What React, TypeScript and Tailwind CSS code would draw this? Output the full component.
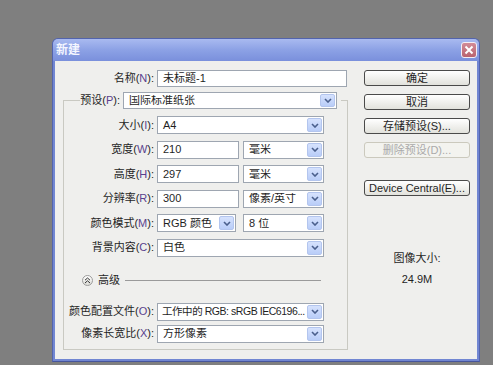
import type { ReactNode } from 'react'

const font = { fontFamily: '"Liberation Sans", "Noto Sans CJK SC", sans-serif' }

function Label({ text, hot, width = 'w-[93px]' }: { text: string; hot: string; width?: string }) {
  return (
    <div className={`${width} shrink-0 flex justify-end pr-[3px] text-[11px] leading-none text-[#1f1f1f] whitespace-nowrap`}>
      <span>
        {text}(<span className="text-[#5a3f8e]">{hot}</span>):
      </span>
    </div>
  )
}

function Arrow() {
  return (
    <div className="w-[15px] h-full shrink-0 rounded-[2px] border border-[#b3c5ee] bg-gradient-to-b from-[#d6e2fd] to-[#b9cdf8] flex items-center justify-center">
      <svg width="8" height="5" viewBox="0 0 8 5">
        <path d="M1 1 L4 4 L7 1" fill="none" stroke="#4a5f8c" strokeWidth="1.6" />
      </svg>
    </div>
  )
}

function Select({ value, w, h = 'h-[18px]', tight }: { value: string; w: string; h?: string; tight?: boolean }) {
  return (
    <div className={`${w} ${h} shrink-0 bg-white border border-[#9ea6b1] flex items-center p-[1px]`}>
      <div
        className={`flex-1 leading-none text-[#1f1f1f] whitespace-nowrap overflow-hidden ${
          tight ? 'pl-[3px] text-[10.5px] tracking-[-0.45px]' : 'pl-[4px] text-[11px]'
        }`}
      >
        {value}
      </div>
      <Arrow />
    </div>
  )
}

function Input({ value, w }: { value: string; w: string }) {
  return (
    <div className={`${w} h-[18px] shrink-0 bg-white border border-[#9ea6b1] flex items-center pl-[5px] text-[11px] leading-none text-[#1f1f1f]`}>
      {value}
    </div>
  )
}

function Row({ children }: { children: ReactNode }) {
  return <div className="flex items-center h-[18px]">{children}</div>
}

function Button({ children, disabled }: { children: ReactNode; disabled?: boolean }) {
  return (
    <div
      className={`w-[106px] h-[16px] rounded-[3px] border flex items-center justify-center leading-none text-[11px] whitespace-nowrap ${
        disabled
          ? 'border-[#cbc9bd] bg-[#f3f3ef] text-[#aaaaaa]'
          : 'border-[#4a4a4a] bg-gradient-to-b from-white to-[#e2e2dc] text-[#1f1f1f]'
      }`}
    >
      {children}
    </div>
  )
}

export default function App() {
  return (
    <div className="w-[493px] h-[365px] bg-[#7f7f7f] pt-[38px] pl-[52px] overflow-hidden" style={font}>
      <div className="w-[428px] h-[324px] rounded-t-[6px] bg-[#7186d2] border border-[#5364ac] border-b-[#46559c] flex flex-col">
        {/* title bar */}
        <div className="h-[22px] shrink-0 rounded-t-[5px] bg-gradient-to-b from-[#a9baf0] via-[#8ca1e5] to-[#7a90dc] flex items-center justify-between pl-[3px] pr-[2px]">
          <span className="text-[#f4f6ff] font-bold text-[12px] leading-none">新建</span>
          <div className="w-[16px] h-[16px] rounded-[3px] border border-[#f4eef4] bg-gradient-to-b from-[#d28b97] to-[#b9636f] flex items-center justify-center">
            <svg width="10" height="10" viewBox="0 0 10 10">
              <path d="M1.5 1.5 L8.5 8.5 M8.5 1.5 L1.5 8.5" stroke="white" strokeWidth="2" />
            </svg>
          </div>
        </div>

        {/* body */}
        <div className="flex-1 min-h-0 mx-[2px] mb-[2px] bg-[#efefed] flex">
          <div className="w-[295px] pl-[8px] pt-[9px] flex flex-col">
            <div className="flex items-center h-[17px]">
              <Label text="名称" hot="N" width="w-[94px]" />
              <div className="w-[190px] h-[17px] bg-white border border-[#9ea6b1] flex items-center pl-[5px] text-[11px] leading-none text-[#1f1f1f]">
                未标题-1
              </div>
            </div>

            <fieldset className="mt-[5px] w-[285px] border border-[#c9c9c2] px-0 pt-[7px] pb-[6px] flex flex-col">
              <legend className="ml-[16px] pl-[2px] pr-[4px]">
                <div className="flex items-center h-[17px]">
                  <Label text="预设" hot="P" width="w-[41px]" />
                  <Select value="国际标准纸张" w="w-[214px]" h="h-[17px]" />
                </div>
              </legend>

              <div className="flex flex-col gap-[6.5px]">
                <Row>
                  <Label text="大小" hot="I" />
                  <Select value="A4" w="w-[167px]" />
                </Row>
                <Row>
                  <Label text="宽度" hot="W" />
                  <Input value="210" w="w-[82px]" />
                  <div className="ml-[4px]">
                    <Select value="毫米" w="w-[81px]" />
                  </div>
                </Row>
                <Row>
                  <Label text="高度" hot="H" />
                  <Input value="297" w="w-[82px]" />
                  <div className="ml-[4px]">
                    <Select value="毫米" w="w-[81px]" />
                  </div>
                </Row>
                <Row>
                  <Label text="分辨率" hot="R" />
                  <Input value="300" w="w-[82px]" />
                  <div className="ml-[4px]">
                    <Select value="像素/英寸" w="w-[81px]" />
                  </div>
                </Row>
                <Row>
                  <Label text="颜色模式" hot="M" />
                  <Select value="RGB 颜色" w="w-[79px]" />
                  <div className="ml-[7px]">
                    <Select value="8 位" w="w-[81px]" />
                  </div>
                </Row>
                <Row>
                  <Label text="背景内容" hot="C" />
                  <Select value="白色" w="w-[167px]" />
                </Row>
              </div>

              <div className="mt-[15px] h-[17px] flex items-center pl-[18px]">
                <div className="w-[11px] h-[11px] rounded-full border border-[#9c9c9c] bg-gradient-to-b from-white to-[#dcdcd6] flex items-center justify-center">
                  <svg width="7" height="7" viewBox="0 0 7 7">
                    <path d="M1 3.2 L3.5 1 L6 3.2 M1 6 L3.5 3.8 L6 6" fill="none" stroke="#333" strokeWidth="1" />
                  </svg>
                </div>
                <span className="ml-[5px] text-[11px] leading-none text-[#1f1f1f]">高级</span>
                <div className="ml-[5px] w-[196px] h-px bg-[#9a9a9a]" />
              </div>

              <div className="mt-[14px] flex flex-col gap-[4px]">
                <Row>
                  <Label text="颜色配置文件" hot="O" />
                  <Select value="工作中的 RGB: sRGB IEC6196..." w="w-[167px]" tight />
                </Row>
                <Row>
                  <Label text="像素长宽比" hot="X" />
                  <Select value="方形像素" w="w-[167px]" />
                </Row>
              </div>
            </fieldset>
          </div>

          <div className="ml-[14px] pt-[9px] flex flex-col items-center w-[106px]">
            <div className="flex flex-col gap-[8px]">
              <Button>确定</Button>
              <Button>取消</Button>
              <Button>存储预设(S)...</Button>
              <Button disabled>删除预设(D)...</Button>
            </div>
            <div className="mt-[22px]">
              <Button>Device Central(E)...</Button>
            </div>
            <div className="mt-[55px] text-[11px] leading-[14px] text-[#1f1f1f]">图像大小:</div>
            <div className="mt-[7px] text-[11px] leading-[14px] text-[#1f1f1f]">24.9M</div>
          </div>
        </div>
      </div>
    </div>
  )
}
